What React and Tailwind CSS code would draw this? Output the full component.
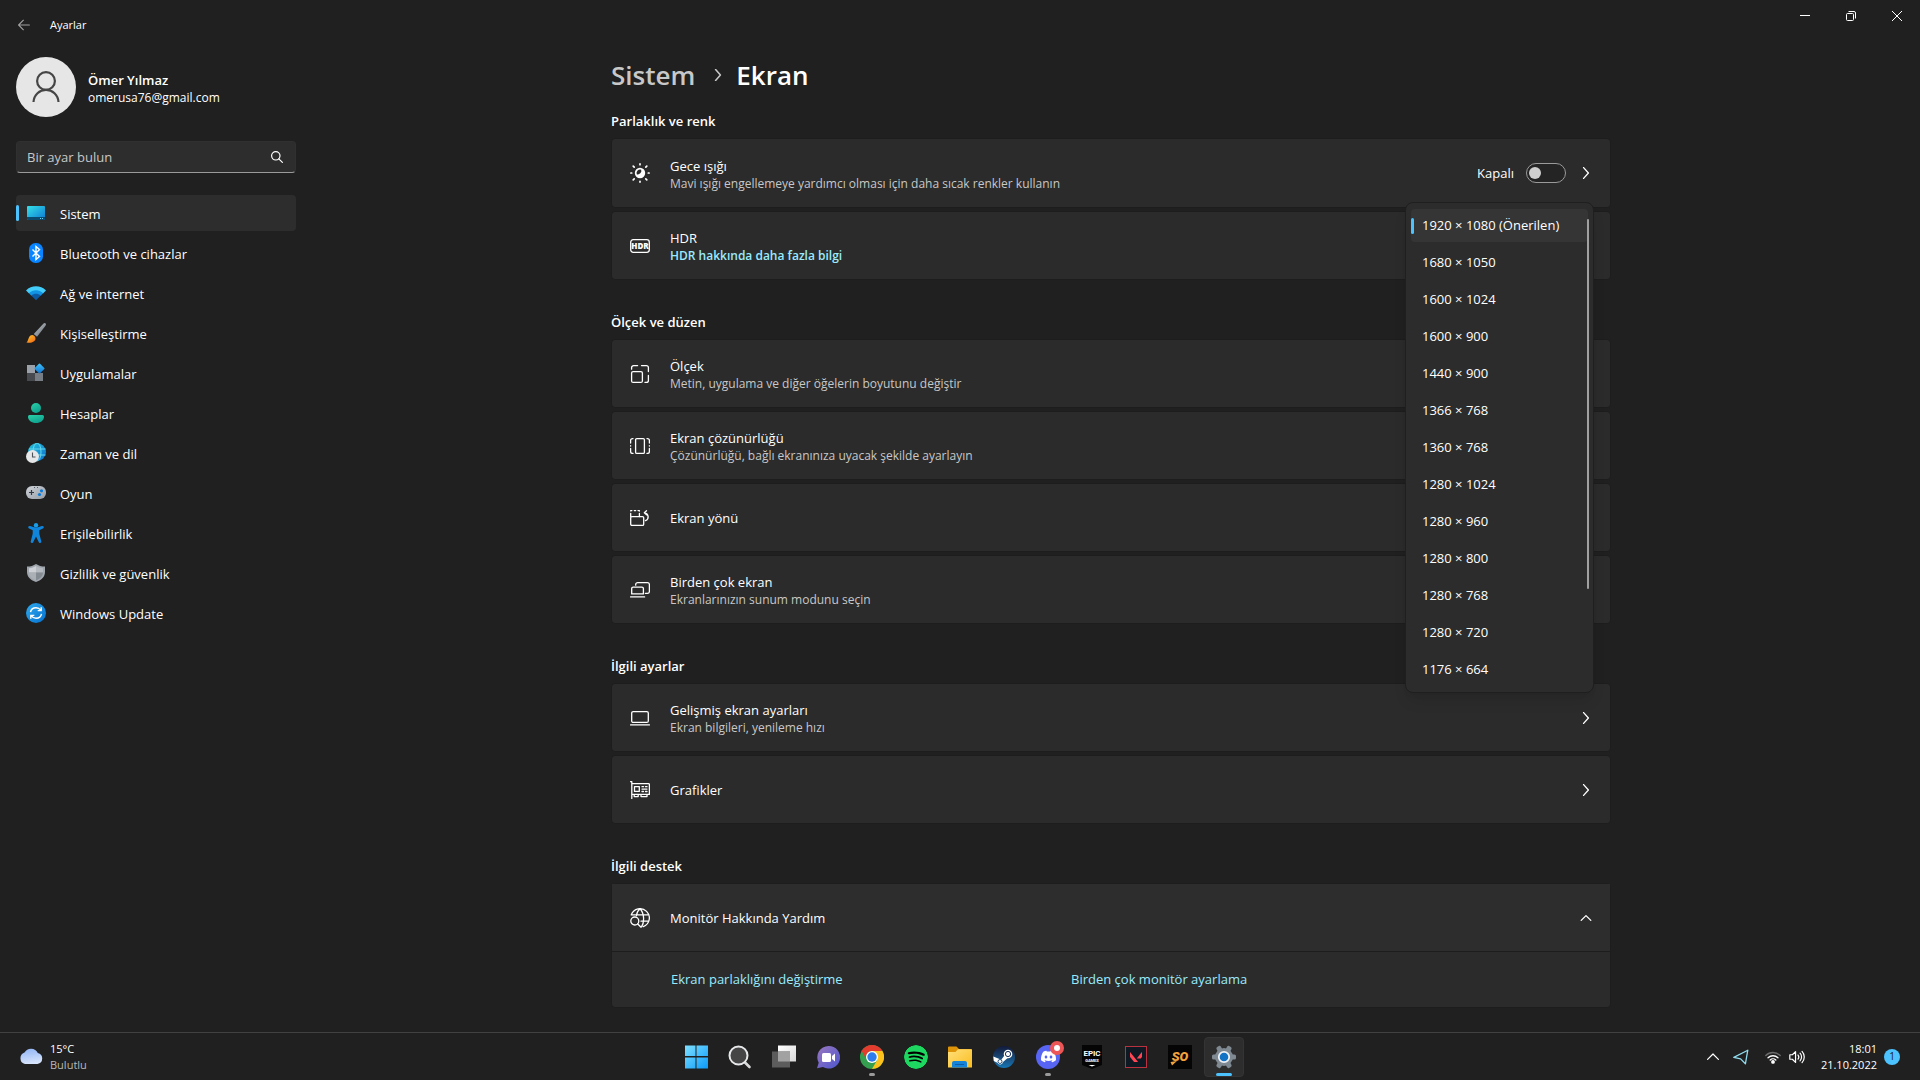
import clsx from "clsx";
import { SiDiscord, SiSpotify, SiSteam, SiValorant } from "react-icons/si";

const RESOLUTIONS = [
  "1920 × 1080 (Önerilen)",
  "1680 × 1050",
  "1600 × 1024",
  "1600 × 900",
  "1440 × 900",
  "1366 × 768",
  "1360 × 768",
  "1280 × 1024",
  "1280 × 960",
  "1280 × 800",
  "1280 × 768",
  "1280 × 720",
  "1176 × 664",
];

// Shared wrapper for the thin line icons
function Line({ size = 20, children, className, width = 1.3 }) {
  return (
    <svg
      width={size}
      height={size}
      viewBox="0 0 20 20"
      fill="none"
      stroke="currentColor"
      strokeWidth={width}
      strokeLinecap="round"
      strokeLinejoin="round"
      className={clsx("shrink-0", className)}
      aria-hidden="true"
    >
      {children}
    </svg>
  );
}

function Color({ size = 20, children }) {
  return (
    <svg width={size} height={size} viewBox={`0 0 ${size} ${size}`} className="shrink-0" aria-hidden="true">
      {children}
    </svg>
  );
}

function Grad({ id, from, to, x2 = 1, y2 = 1 }) {
  return (
    <linearGradient id={id} x1="0" y1="0" x2={x2} y2={y2}>
      <stop stopColor={from} />
      <stop offset="1" stopColor={to} />
    </linearGradient>
  );
}

function ChevronRight() {
  return (
    <Line size={12} width={2.2}>
      <path d="M6 1l8 9-8 9" />
    </Line>
  );
}

/* ---------- sidebar icons ---------- */

const SystemIcon = () => (
  <Color>
    <Grad id="sys" from="#35e0e8" to="#0c78d4" />
    <rect x="1" y="3" width="18" height="14" rx="1" fill="url(#sys)" />
    <path d="M1 14h18v2a1 1 0 0 1-1 1H2a1 1 0 0 1-1-1z" fill="#0b4a6f" />
    <path d="M14 15h1v1h-1zM16 15h1v1h-1z" fill="#6fd3f5" />
  </Color>
);

const BluetoothIcon = () => (
  <Color>
    <rect x="3" y="0" width="14" height="20" rx="6.5" fill="#0a84ff" />
    <path d="M6.5 6.5l7 7-3.500 3v-13l3.500 3-7 7" fill="none" stroke="#fff" strokeWidth="1.4" />
  </Color>
);

const NetworkIcon = () => (
  <Color>
    <path d="M0 7.500C5.500 1.900 14.500 1.900 20 7.500L17.200 10.300 10 9 2.800 10.300z" fill="#42cdfb" />
    <path d="M2.800 10.200C7 6.200 13 6.200 17.200 10.200L14.300 13 10 12.200 5.700 13z" fill="#1293e4" />
    <path d="M5.200 12.500C8 10.200 12 10.200 14.800 12.500L10 17.200z" fill="#0c59a4" />
  </Color>
);

const BrushIcon = () => (
  <Color>
    <Grad id="handle" from="#c3cad1" to="#5f666d" />
    <Grad id="tip" from="#ffc928" to="#f0641a" />
    <path d="M19.600.400c.700.700.400 1.600-.100 2.300L11 13.800 7.800 11 17.300.800c.700-.700 1.600-1 2.300-.400z" fill="url(#handle)" />
    <path d="M4.500 12.500c2-1.500 5 .300 5 3.100 0 3.400-5 5.200-9.200 3.700 2.200-.600 1.700-5 4.200-6.800z" fill="url(#tip)" />
  </Color>
);

const AppsIcon = () => (
  <Color>
    <Grad id="appsBlue" from="#3fc5fb" to="#0f6fd0" />
    <path d="M1 2h8v8H1z" fill="#9ba1a8" />
    <path d="M1 10h8v8H1z" fill="#474b50" />
    <path d="M9 10h8v8H9z" fill="#787e85" />
    <rect x="9.700" y="1.700" width="7.600" height="7.600" rx=".8" transform="rotate(45 13.500 5.500)" fill="url(#appsBlue)" />
  </Color>
);

const AccountsIcon = () => (
  <Color>
    <Grad id="acc" from="#2bd1a9" to="#0ea18f" x2={0.6} />
    <circle cx="10" cy="5" r="5" fill="url(#acc)" />
    <path d="M3.500 12h13A1.500 1.500 0 0 1 18 13.500C18 17.500 14.500 20 10 20s-8-2.500-8-6.500A1.500 1.500 0 0 1 3.500 12z" fill="url(#acc)" />
  </Color>
);

const TimeIcon = () => (
  <Color>
    <Grad id="globe" from="#27c4d8" to="#0b6ed0" />
    <circle cx="11" cy="9" r="9" fill="url(#globe)" />
    <g fill="none" stroke="#6de0ee" strokeWidth=".9">
      <path d="M3 6h16.500M3 12h16.500" />
      <ellipse cx="11" cy="9" rx="4" ry="9" />
    </g>
    <circle cx="6.500" cy="13.500" r="6.500" fill="#e4e6e8" />
    <path d="M6.500 9.500v4.500h3" fill="none" stroke="#4c5157" strokeWidth="1.1" />
  </Color>
);

const GamingIcon = () => (
  <Color>
    <Grad id="pad" from="#cfd4da" to="#959ca4" />
    <rect x="0" y="3" width="20" height="13" rx="6" fill="url(#pad)" />
    <path d="M5.500 7v5M3 9.500h5" stroke="#33383e" strokeWidth="1.2" />
    <path d="M8 4.500h1M11 4.500h1" stroke="#555b62" />
    <circle cx="15.500" cy="7.800" r="1.600" fill="#0b7bd8" />
    <circle cx="13.500" cy="11.500" r="1.600" fill="#0b7bd8" />
  </Color>
);

const AccessIcon = () => (
  <Color>
    <circle cx="10" cy="2.200" r="2.200" fill="#1b9de8" />
    <path
      d="M2.300 3.800c.300-.900 1.200-1 2-.700 3.600 1.900 7.800 1.900 11.400 0 .8-.3 1.700-.2 2 .7.300.8-.1 1.400-.8 1.700L13.300 7.300v3.400l2 7.700c.2.900-.3 1.500-1.100 1.600-.7.100-1.200-.3-1.500-1L10 13.500 7.300 19c-.3.700-.8 1.100-1.500 1-.8-.1-1.300-.7-1.100-1.600l2-7.700V7.300L3.100 5.500c-.7-.3-1.100-.9-.8-1.700z"
      fill="#0f85dc"
    />
  </Color>
);

const ShieldIcon = () => (
  <Color>
    <path d="M10 1c2.500 1.700 5.500 2.600 9 2.600V9c0 5-4 8.300-9 10C5 17.300 1 14 1 9V3.600C4.500 3.600 7.500 2.700 10 1z" fill="#a0a6ad" />
    <path d="M10 3c-2 1.300-4.200 2-7 2.200V9.500h7z" fill="#cdd1d6" />
    <path d="M10 3c2 1.300 4.200 2 7 2.200V9.500h-7z" fill="#b5bac0" />
    <path d="M10 9.500H3c.2 4 3 6.300 7 7.700z" fill="#aab0b6" />
    <path d="M10 9.500h7c-.2 4-3 6.300-7 7.700z" fill="#858b92" />
  </Color>
);

const UpdateIcon = () => (
  <Color>
    <Grad id="upd" from="#2fa9ee" to="#0471cf" />
    <circle cx="10" cy="10" r="10" fill="url(#upd)" />
    <g fill="none" stroke="#fff" strokeWidth="1.4">
      <path d="M4.500 9.200C5 6.400 7.300 4.800 10 4.800c2 0 3.700.9 4.800 2.500M15.200 4.200v3.400h-3.500" />
      <path d="M15.500 10.800c-.5 2.800-2.800 4.400-5.500 4.400-2 0-3.700-.9-4.800-2.500M4.800 15.800v-3.400h3.500" />
    </g>
  </Color>
);

const NAV = [
  { label: "Sistem", icon: SystemIcon, active: true },
  { label: "Bluetooth ve cihazlar", icon: BluetoothIcon },
  { label: "Ağ ve internet", icon: NetworkIcon },
  { label: "Kişiselleştirme", icon: BrushIcon },
  { label: "Uygulamalar", icon: AppsIcon },
  { label: "Hesaplar", icon: AccountsIcon },
  { label: "Zaman ve dil", icon: TimeIcon },
  { label: "Oyun", icon: GamingIcon },
  { label: "Erişilebilirlik", icon: AccessIcon },
  { label: "Gizlilik ve güvenlik", icon: ShieldIcon },
  { label: "Windows Update", icon: UpdateIcon },
];

/* ---------- settings row icons ---------- */

const NightLightIcon = () => (
  <Line>
    <circle cx="10" cy="10" r="5.200" fill="currentColor" stroke="none" />
    <path d="M6.700 11.200a3.600 3.600 0 0 1 4.500-4.500 3.600 3.600 0 0 1-4.500 4.500z" fill="#2b2b2b" stroke="none" />
    <path
      d="M10 .9v.8M10 18.300v.8M.9 10h.8M18.300 10h.8M3.200 3.200l1 1M15.800 15.800l1 1M3.200 16.800l1-1M15.800 4.200l1-1"
      strokeWidth="1.700"
    />
  </Line>
);

const HdrIcon = () => (
  <Line>
    <rect x=".7" y="3.700" width="18.600" height="12.600" rx="2.500" />
    <text x="10" y="13" textAnchor="middle" fontSize="8" fontWeight="800" fill="currentColor" stroke="none">
      HDR
    </text>
  </Line>
);

const ScaleIcon = () => (
  <Line>
    <rect x="1.600" y="7.600" width="10.800" height="10.800" rx="1.500" />
    <path d="M1.600 5.200V3.600a2 2 0 0 1 2-2h4M11.500 1.600h4.900a2 2 0 0 1 2 2v4M18.400 11.500v4.900a2 2 0 0 1-2 2h-1.400" />
  </Line>
);

const ResolutionIcon = () => (
  <Line>
    <rect x="5.600" y="2.600" width="8.800" height="14.800" rx="1.200" />
    <path d="M3 2.600h-.5a1.900 1.900 0 0 0-1.900 1.900v2.500M.6 12.500v3a1.900 1.900 0 0 0 1.900 1.900H3M17 2.600h.5a1.900 1.900 0 0 1 1.900 1.900v2.500M19.400 12.500v3a1.900 1.900 0 0 1-1.900 1.900H17M.6 9.700v.3M19.400 9.700v.3" />
  </Line>
);

const OrientationIcon = () => (
  <Line>
    <rect x=".7" y="8.600" width="13" height="8.800" rx="1.200" />
    <path d="M.7 5.500v3M.7 2.900v-.3h1.200M4.300 2.600h1.400M8 2.600h1.400v.5M9.400 5.500v3" />
    <path d="M16.500 2.800l-2.200 2 2.200 2M14.500 4.800a4.100 4.100 0 0 1 1 7.900" />
  </Line>
);

const MultiIcon = () => (
  <Line>
    <path d="M5.700 5.200V4.600a2 2 0 0 1 2-2h9.700a2 2 0 0 1 2 2v6.800a2 2 0 0 1-2 2h-2" />
    <path d="M1.700 13.900V8.600a1.500 1.500 0 0 1 1.500-1.500h8.700a1.500 1.500 0 0 1 1.500 1.500v5.300zM.6 16.900h14" />
  </Line>
);

const LaptopIcon = () => (
  <Line>
    <rect x="1.700" y="3.600" width="16.600" height="10.800" rx="1.500" />
    <path d="M.6 16.900h18.800" />
  </Line>
);

const GpuIcon = () => (
  <Line>
    <path d="M.6 1.600h1.200v16.800M1.800 3.600h16.600a1 1 0 0 1 1 1v9.800H1.800M4.200 14.400v2.200h4v-2.200M11 14.400v2.200h6v-2.200" />
    <path d="M4.500 6.600h4.800v4.800H4.500z" />
    <path d="M12 6.700h1.500M15.500 6.700H17M12 9.100h5M12 11.500h1.500M15.500 11.500H17" />
  </Line>
);

const GlobeHelpIcon = () => (
  <Line>
    <path d="M1.300 6.800a9.300 9.300 0 1 1 12 11.900M10 .7C7.800 2.600 6.700 5 6.500 7.500M10 .7c4.500 4.500 4.500 13.500 1.500 18.200M1.300 6.900h17.400M11 13.200h7.700" />
    <circle cx="4.800" cy="13" r="4" />
    <path d="M7.800 16l3 3" />
  </Line>
);

/* ---------- pieces of the page ---------- */

function TitleBar() {
  return (
    <header className="flex h-[49px] items-start justify-between">
      <div className="flex h-[49px] items-center pl-[18px]">
        <button type="button" aria-label="Geri" className="text-[#a0a0a0]">
          <Line size={12} width={1.8}>
            <path d="M19 10H1M9 2l-8 8 8 8" />
          </Line>
        </button>
        <span className="ml-5 text-[11px] leading-4">Ayarlar</span>
      </div>
      <div className="flex">
        <button type="button" aria-label="Simge durumuna küçült" className="flex h-8 w-[46px] items-center justify-center">
          <svg width="10" height="10" stroke="currentColor">
            <path d="M0 4.500h10" />
          </svg>
        </button>
        <button type="button" aria-label="Geri yükle" className="flex h-8 w-[46px] items-center justify-center">
          <svg width="10" height="10" fill="none" stroke="currentColor">
            <rect x=".5" y="2.500" width="7" height="7" rx="1" />
            <path d="M2.500.5H8A1.500 1.500 0 0 1 9.500 2v5.500" />
          </svg>
        </button>
        <button type="button" aria-label="Kapat" className="flex h-8 w-[46px] items-center justify-center">
          <svg width="10" height="10" stroke="currentColor">
            <path d="M0 0l10 10M10 0L0 10" />
          </svg>
        </button>
      </div>
    </header>
  );
}

function Sidebar() {
  return (
    <aside className="w-[312px] shrink-0 px-4 pt-2">
      <div className="flex items-center gap-3">
        <div className="flex size-[60px] items-center justify-center rounded-full bg-[#e6e6e6] text-[#454545]">
          <svg width="28" height="32" viewBox="0 0 28 32" fill="none" stroke="currentColor" strokeWidth="2.200">
            <circle cx="14" cy="10" r="8.900" />
            <path d="M1.500 31C2 24 7.500 18.900 14 18.900S26 24 26.500 31" />
          </svg>
        </div>
        <div className="pt-[2px]">
          <p className="text-[13px] font-semibold leading-5">Ömer Yılmaz</p>
          <p className="text-xs leading-4">omerusa76@gmail.com</p>
        </div>
      </div>

      <div className="mt-6 flex h-8 items-center rounded-[4px] border border-[#303030] border-b-[#9a9a9a] bg-[#2d2d2d] pl-[10px] pr-3">
        <input
          type="text"
          aria-label="Bir ayar bulun"
          placeholder="Bir ayar bulun"
          className="min-w-0 flex-1 bg-transparent pt-[2px] text-[13px] outline-none placeholder:text-[#c8c8c8]"
        />
        <Line size={12} width={2}>
          <circle cx="8" cy="8" r="7" />
          <path d="M13 13l6 6" />
        </Line>
      </div>

      <nav className="mt-[22px] flex flex-col gap-1">
        {NAV.map(({ label, icon: Icon, active }) => (
          <a
            key={label}
            href="#"
            className={clsx("relative flex h-9 items-center gap-[14px] rounded-[4px] pl-[10px] text-[13px]", active && "bg-[#2d2d2d]")}
          >
            {active && <span className="absolute left-0 top-[10px] h-4 w-[3px] rounded-full bg-[#4cc2ff]" />}
            <Icon />
            <span className="pt-1">{label}</span>
          </a>
        ))}
      </nav>
    </aside>
  );
}

function Card({ icon: Icon, title, sub, link, tall, children }) {
  return (
    <div
      className={clsx(
        "relative flex items-center rounded-[4px] border border-[#1d1d1d] bg-[#2b2b2b] px-[18px]",
        tall ? "h-[70px]" : "h-[69px]"
      )}
    >
      <Icon />
      <div className={clsx("ml-5 flex-1", tall && "pt-px")}>
        <p className="text-[13px] leading-5">{title}</p>
        {sub && <p className="text-xs leading-4 text-[#c8c8c8]">{sub}</p>}
        {link && (
          <a href="#" className="block text-xs font-semibold leading-4 text-[#99ebff]">
            {link}
          </a>
        )}
      </div>
      {children}
    </div>
  );
}

function Section({ title, children }) {
  return (
    <section>
      <h2 className="mb-[7px] text-[13px] font-semibold leading-5">{title}</h2>
      <div className="flex flex-col gap-[3px]">{children}</div>
    </section>
  );
}

function ResolutionMenu() {
  return (
    <div className="absolute -top-[210px] right-4 z-10 w-[189px] rounded-lg border border-[#1f1f1f] bg-[#2c2c2c] px-[5px] py-[6px] shadow-lg">
      <select
        size={13}
        aria-label="Ekran çözünürlüğü"
        defaultValue={RESOLUTIONS[0]}
        className="scheme-dark block h-[477px] w-full appearance-none overflow-hidden bg-transparent text-[13px] text-white outline-none [scrollbar-width:none]"
      >
        {RESOLUTIONS.map((r) => (
          <option
            key={r}
            value={r}
            className="mb-1 block h-[33px] rounded-[4px] px-[11px] pb-0 pt-[7px] checked:bg-[linear-gradient(#353535,#353535)]"
          >
            {r}
          </option>
        ))}
      </select>
      <span className="absolute left-[5px] top-[15px] h-4 w-[3px] rounded-full bg-[#4cc2ff]" />
      <span className="absolute right-[4px] top-4 h-[370px] w-[2px] rounded-full bg-[#a0a0a0]" />
    </div>
  );
}

function Content() {
  return (
    <main className="flex-1 pr-[10px] pt-2">
      <div className="mx-auto max-w-[1000px]">
        <h1 className="mb-[18px] flex h-9 items-center text-[26px] font-semibold leading-9">
          <a href="#" className="text-[#c8c8c8]">
            Sistem
          </a>
          <Line size={12} width={2.6} className="ml-[17px] mr-3 text-[#c8c8c8]">
            <path d="M6 1l8 9-8 9" />
          </Line>
          <span>Ekran</span>
        </h1>

        <div className="flex flex-col gap-8">
          <Section title="Parlaklık ve renk">
            <Card
              tall
              icon={NightLightIcon}
              title="Gece ışığı"
              sub="Mavi ışığı engellemeye yardımcı olması için daha sıcak renkler kullanın"
            >
              <label className="flex items-center gap-3 text-[13px]">
                <span className="pt-[2px]">Kapalı</span>
                <input
                  type="checkbox"
                  role="switch"
                  className="flex h-5 w-10 appearance-none items-center rounded-full border border-[#9a9a9a] bg-[#242424] pl-[2px] before:size-3 before:rounded-full before:bg-[#cfcfcf]"
                />
              </label>
              <button type="button" aria-label="Gece ışığı ayarları" className="ml-[14px]">
                <ChevronRight />
              </button>
            </Card>
            <Card icon={HdrIcon} title="HDR" link="HDR hakkında daha fazla bilgi" />
          </Section>

          <Section title="Ölçek ve düzen">
            <Card icon={ScaleIcon} title="Ölçek" sub="Metin, uygulama ve diğer öğelerin boyutunu değiştir" />
            <Card icon={ResolutionIcon} title="Ekran çözünürlüğü" sub="Çözünürlüğü, bağlı ekranınıza uyacak şekilde ayarlayın">
              <ResolutionMenu />
            </Card>
            <Card icon={OrientationIcon} title="Ekran yönü" />
            <Card icon={MultiIcon} title="Birden çok ekran" sub="Ekranlarınızın sunum modunu seçin" />
          </Section>

          <Section title="İlgili ayarlar">
            <Card icon={LaptopIcon} title="Gelişmiş ekran ayarları" sub="Ekran bilgileri, yenileme hızı">
              <button type="button" aria-label="Gelişmiş ekran ayarları">
                <ChevronRight />
              </button>
            </Card>
            <Card icon={GpuIcon} title="Grafikler">
              <button type="button" aria-label="Grafikler">
                <ChevronRight />
              </button>
            </Card>
          </Section>

          <Section title="İlgili destek">
            <div className="rounded-[4px] border border-[#1d1d1d] bg-[#2b2b2b]">
              <div className="flex h-[68px] items-center border-b border-[#1d1d1d] bg-[#2d2d2d] px-[18px]">
                <GlobeHelpIcon />
                <p className="ml-5 flex-1 text-[13px] leading-5">Monitör Hakkında Yardım</p>
                <button type="button" aria-label="Daralt" aria-expanded="true">
                  <Line size={12} width={2.2}>
                    <path d="M2 14l8-8 8 8" />
                  </Line>
                </button>
              </div>
              <div className="grid h-[55px] grid-cols-[400px_1fr] items-center pl-[59px] pt-px text-[13px] text-[#99ebff]">
                <a href="#">Ekran parlaklığını değiştirme</a>
                <a href="#">Birden çok monitör ayarlama</a>
              </div>
            </div>
          </Section>
        </div>
      </div>
    </main>
  );
}

/* ---------- taskbar ---------- */

const StartIcon = () => (
  <Color size={24}>
    <Grad id="win" from="#7fe0ff" to="#0a9bfb" />
    <path d="M1 .5h10.500V11H1zM12.500.5H24V11H12.500zM1 12.500h10.500V23.500H1zM12.500 12.500H24V23.500H12.500z" fill="url(#win)" />
  </Color>
);

const SearchIcon = () => (
  <Color size={24}>
    <path d="M16.500 17l5 5" stroke="#d8d8d8" strokeWidth="2.600" strokeLinecap="round" />
    <circle cx="10.500" cy="10.500" r="9" fill="#454545" stroke="#e6e8ea" strokeWidth="2" />
  </Color>
);

const TaskViewIcon = () => (
  <Color size={24}>
    <Grad id="tv" from="#ffffff" to="#d8d8d8" />
    <path d="M6 .5h18v16H6z" fill="url(#tv)" />
    <path d="M0 6.500h18v16H0z" fill="#5c5c5c" />
    <path d="M6 6.500h12v10H6z" fill="#a2a2a2" />
  </Color>
);

const ChatIcon = () => (
  <Color size={24}>
    <Grad id="chat" from="#9a78bd" to="#4c55d0" />
    <path d="M12.500 1A11.300 11.300 0 1 1 7 22l-6 1.300 1.700-5.500A11.300 11.300 0 0 1 12.500 1z" fill="url(#chat)" />
    <rect x="6" y="8" width="9" height="9" rx="1.500" fill="#fff" />
    <path d="M16 11l3-2.500v8L16 14z" fill="#fff" />
  </Color>
);

const ChromeIcon = () => (
  <Color size={24}>
    <circle cx="12" cy="12" r="12" fill="#34a04f" />
    <path d="M12 6h10.400A12 12 0 0 1 12 24l5.200-9z" fill="#fcc21b" />
    <path d="M1.600 6A12 12 0 0 1 22.400 6H12a6 6 0 0 0-5.200 9z" fill="#e33b2e" />
    <circle cx="12" cy="12" r="6" fill="#fff" />
    <circle cx="12" cy="12" r="4.700" fill="#2f7cec" />
  </Color>
);

const ExplorerIcon = () => (
  <Color size={24}>
    <Grad id="folder" from="#ffe07a" to="#fbbd20" />
    <path d="M0 2.500a1 1 0 0 1 1-1h7.500l2.500 2.500H23a1 1 0 0 1 1 1v6H0z" fill="#dd9408" />
    <path d="M0 7h7.500L10 4.300h13a1 1 0 0 1 1 1V22.500H0z" fill="url(#folder)" />
    <path d="M4 22.500V18a2 2 0 0 1 2-2h11a2 2 0 0 1 2 2v4.500z" fill="#1583d7" />
    <path d="M7 19.500h9" stroke="#0d5ea6" />
  </Color>
);

const SteamIcon = () => (
  <span className="flex size-[22px] items-center justify-center rounded-full bg-gradient-to-b from-[#111a3a] to-[#1478b5]">
    <svg width="22" height="22" viewBox="0 0 22 22" aria-hidden="true">
      <path d="M.3 10.500l8 3.300 4.200-5.800 2.500 3.700-5 4.300a3 3 0 0 1-5.600.800L.8 15z" fill="#fff" />
      <circle cx="15" cy="8" r="4.300" fill="#fff" />
      <circle cx="15" cy="8" r="2.600" fill="#fff" stroke="#15305c" strokeWidth="1" />
      <circle cx="7" cy="15.500" r="2" fill="none" stroke="#15456f" strokeWidth=".9" />
    </svg>
  </span>
);

const DiscordIcon = () => (
  <span className="relative flex size-6 items-center justify-center rounded-full bg-[#5865f2] text-white">
    <SiDiscord size={15} />
    <span className="absolute -right-1 -top-1 flex size-[14px] items-center justify-center rounded-full bg-[#ed5656]">
      <span className="size-[6px] rounded-full bg-white" />
    </span>
  </span>
);

const EpicIcon = () => (
  <Color size={24}>
    <path d="M2 0h20v20l-10 4-10-4z" fill="#050505" />
    <g fill="#fff" textAnchor="middle" fontWeight="700" className="font-['Roboto']">
      <text x="12" y="11" fontSize="8">
        EPIC
      </text>
      <text x="12" y="17" fontSize="4">
        GAMES
      </text>
    </g>
    <path d="M8.500 20h7L12 21.500z" fill="#fff" />
  </Color>
);

const ValorantIcon = () => (
  <span className="flex size-[22px] items-center justify-center border border-[#b8323f] bg-[#0f1923] text-[#ff4655]">
    <SiValorant size={12} />
  </span>
);

const StandoffIcon = () => (
  <Color size={24}>
    <path d="M0 0h24v24H0z" fill="#050505" />
    <text x="12" y="16" textAnchor="middle" fontSize="13" fontWeight="900" fontStyle="italic" fill="#f2a33c" className="font-['Roboto']">
      SO
    </text>
    <path d="M2.500 17l6.500-1-5 4.500z" fill="#f2a33c" />
  </Color>
);

const SettingsIcon = () => (
  <Color size={24}>
    <g fill="#7f8992">
      <circle cx="12" cy="12" r="9" />
      <rect x="9.500" y="0" width="5" height="24" rx="1.500" transform="rotate(30 12 12)" />
      <rect x="9.500" y="0" width="5" height="24" rx="1.500" transform="rotate(90 12 12)" />
      <rect x="9.500" y="0" width="5" height="24" rx="1.500" transform="rotate(150 12 12)" />
    </g>
    <circle cx="12" cy="12" r="5.200" fill="#1272c4" stroke="#eef1f4" strokeWidth="1.800" />
  </Color>
);

const APPS = [
  { label: "Başlat", icon: StartIcon },
  { label: "Ara", icon: SearchIcon },
  { label: "Görev görünümü", icon: TaskViewIcon },
  { label: "Sohbet", icon: ChatIcon },
  { label: "Chrome", icon: ChromeIcon, running: true },
  { label: "Spotify", icon: () => <SiSpotify size={24} className="rounded-full bg-black text-[#1ed760]" /> },
  { label: "Dosya Gezgini", icon: ExplorerIcon },
  { label: "Steam", icon: SteamIcon },
  { label: "Discord", icon: DiscordIcon, running: true },
  { label: "Epic Games", icon: EpicIcon },
  { label: "Valorant", icon: ValorantIcon },
  { label: "Standoff", icon: StandoffIcon },
  { label: "Ayarlar", icon: SettingsIcon, active: true },
];

function Taskbar() {
  return (
    <footer className="grid h-12 grid-cols-[1fr_auto_1fr] items-center border-t border-[#414141] bg-[#202020]">
      <button type="button" className="flex items-center gap-[7px] pl-[19px] text-left text-[11px] leading-4">
        <Color size={24}>
          <Grad id="cloud" from="#8fb4f5" to="#d5e3fb" x2={0.2} />
          <path d="M6 19a6 6 0 0 1-.5-11.500 7.500 7.500 0 0 1 13.300.5A5.600 5.600 0 0 1 18.500 19z" fill="url(#cloud)" />
        </Color>
        <span>
          <span className="block">15°C</span>
          <span className="block text-[#b8b8b8]">Bulutlu</span>
        </span>
      </button>

      <div className="flex gap-1">
        {APPS.map(({ label, icon: Icon, running, active }) => (
          <button
            key={label}
            type="button"
            aria-label={label}
            className={clsx(
              "relative flex size-10 items-center justify-center rounded-[4px]",
              active && "border border-[#343434] bg-[#2d2d2d]"
            )}
          >
            <Icon />
            {running && <span className="absolute bottom-[1px] left-[17px] h-[3px] w-[6px] rounded-full bg-[#9a9a9a]" />}
            {active && <span className="absolute bottom-0 left-[11px] h-[3px] w-4 rounded-full bg-[#4cc2ff]" />}
          </button>
        ))}
      </div>

      <div className="flex items-center justify-end pr-5">
        <button type="button" aria-label="Gizli simgeler">
          <Line size={12} width={2}>
            <path d="M1 14l9-9 9 9" />
          </Line>
        </button>
        <Line size={16} className="ml-[14px] text-[#8fdcf0]" width={1.6}>
          <path d="M18.500 1.500L1 10.500l8.500 1.800L15.500 18.500z" />
        </Line>
        <Line size={16} className="ml-4" width={1.7}>
          <path d="M1 8.200a12.500 12.500 0 0 1 18 0" stroke="#6b6b6b" />
          <path d="M3.800 11a8.800 8.800 0 0 1 12.400 0M6.500 13.700a5 5 0 0 1 7 0" />
          <circle cx="10" cy="16.200" r="1.500" fill="currentColor" />
        </Line>
        <Line size={16} className="ml-2" width={1.5}>
          <path d="M1 7.200h3.200l4-4v13.600l-4-4H1z" />
          <path d="M11.300 7.500a4 4 0 0 1 0 5M13.800 5.200a7 7 0 0 1 0 9.600M16.300 2.900a10.500 10.500 0 0 1 0 14.200" />
        </Line>
        <div className="ml-4 text-right text-[11px] leading-4">
          <p>18:01</p>
          <p>21.10.2022</p>
        </div>
        <span className="ml-[7px] flex size-4 items-center justify-center rounded-full bg-[#4cc2ff] text-[10px] text-[#1a1a1a]">1</span>
      </div>
    </footer>
  );
}

export default function App() {
  return (
    <div className="flex min-h-screen flex-col bg-[#202020] font-['Open_Sans','Noto_Sans',sans-serif] text-white">
      <TitleBar />
      <div className="flex flex-1">
        <Sidebar />
        <Content />
      </div>
      <Taskbar />
    </div>
  );
}
